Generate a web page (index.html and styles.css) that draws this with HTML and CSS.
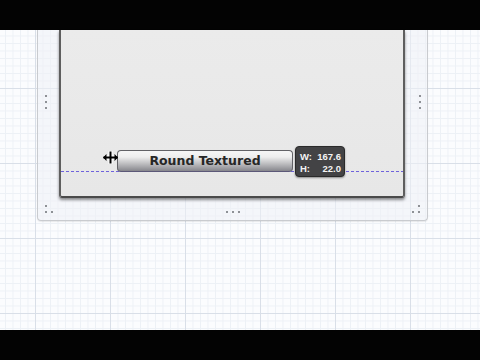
FILE: index.html
```html
<!DOCTYPE html>
<html>
<head>
<meta charset="utf-8">
<link rel="stylesheet" href="styles.css">
</head>
<body>
<div class="screen">
  <div class="bar"></div>
  <div class="canvas">
    <div class="panel">
      <span class="dots dots-left"><i></i><i></i><i></i></span>
      <span class="dots dots-right"><i></i><i></i><i></i></span>
      <span class="corner corner-bl"><i class="c1"></i><i class="c2"></i><i class="c3"></i></span>
      <span class="corner corner-br"><i class="c1"></i><i class="c2"></i><i class="c3"></i></span>
      <span class="dots-bottom"><i></i><i></i><i></i></span>
      <div class="window">
        <div class="guide"></div>
        <div class="row">
          <svg class="cursor" width="17" height="15" viewBox="0 0 17 15">
            <path d="M8.5 1 L8.5 14 M2 7.5 L15 7.5" stroke="#fff" stroke-width="4"/>
            <path d="M8.5 1.5 L8.5 13.5 M1.5 7.5 L15.5 7.5" stroke="#000" stroke-width="2"/>
            <path d="M1 7.5 L4.5 4 L4.5 11 Z M16 7.5 L12.5 4 L12.5 11 Z" fill="#000"/>
          </svg>
          <div class="button">Round Textured</div>
          <div class="tip">
            <div class="tip-line"><span>W:</span><span>167.6</span></div>
            <div class="tip-line"><span>H:</span><span>22.0</span></div>
          </div>
        </div>
      </div>
    </div>
  </div>
  <div class="bar"></div>
</div>
</body>
</html>
```
FILE: styles.css
```css
html, body {
  margin: 0;
  padding: 0;
  background: #000;
}
.screen {
  width: 480px;
  height: 360px;
  display: flex;
  flex-direction: column;
  overflow: hidden;
}
.bar {
  height: 30px;
  background: #030303;
}
.canvas {
  position: relative;
  height: 300px;
  background-color: #fbfcfe;
  background-image:
    linear-gradient(to right, #d9dfe8 1px, transparent 1px),
    linear-gradient(to bottom, #d9dfe8 1px, transparent 1px),
    linear-gradient(to right, #edf1f6 1px, transparent 1px),
    linear-gradient(to bottom, #edf1f6 1px, transparent 1px);
  background-size: 75px 75px, 75px 75px, 7.5px 7.5px, 7.5px 7.5px;
  background-position: 35px -17px, 35px -17px, 35px -17px, 35px -17px;
}
.panel {
  position: absolute;
  left: 37px;
  top: 0;
  width: 389px;
  height: 190px;
  border: 1px solid #c9cbcf;
  border-top: none;
  border-radius: 0 0 4px 4px;
  background: rgba(238, 241, 246, 0.55);
  box-shadow: 0 1px 1px rgba(0,0,0,0.08);
}
.dots {
  position: absolute;
  top: 65px;
  display: flex;
  flex-direction: column;
  gap: 4px;
}
.dots i, .dots-bottom i, .corner i {
  display: block;
  width: 2px;
  height: 2px;
  border-radius: 1px;
  background: #6d6f74;
}
.dots-left { left: 7px; }
.dots-right { right: 6px; }
.dots-bottom {
  position: absolute;
  left: 188px;
  bottom: 7px;
  display: flex;
  gap: 4px;
}
.corner {
  position: absolute;
  width: 8px;
  height: 8px;
}
.corner i { position: absolute; }
.corner-bl { left: 7px; bottom: 7px; }
.corner-bl .c1 { left: 0; top: 0; }
.corner-bl .c2 { left: 0; top: 6px; }
.corner-bl .c3 { left: 6px; top: 6px; }
.corner-br { right: 7px; bottom: 7px; }
.corner-br .c1 { right: 0; top: 0; }
.corner-br .c2 { right: 0; top: 6px; }
.corner-br .c3 { right: 6px; top: 6px; }
.window {
  position: absolute;
  left: 21px;
  top: 0;
  width: 346px;
  height: 168px;
  box-sizing: border-box;
  border: 2px solid #5e5e5e;
  border-top: none;
  border-bottom: 2px solid #4a4a4a;
  border-radius: 0 0 3px 3px;
  background: linear-gradient(to bottom, #ebebeb, #e7e7e7);
  box-shadow: 0 2px 3px rgba(0,0,0,0.45);
  padding-top: 120px;
}
.guide {
  position: absolute;
  left: 0;
  right: 0;
  top: 141px;
  height: 1px;
  background: repeating-linear-gradient(to right, #6e62dc 0 3px, transparent 3px 5px);
}
.row {
  position: relative;
  display: flex;
  align-items: flex-start;
  padding-left: 56px;
}
.cursor {
  position: absolute;
  left: 41px;
  top: 0px;
}
.button {
  width: 176px;
  height: 22px;
  box-sizing: border-box;
  border: 1px solid #626266;
  border-bottom-color: #5c5878;
  border-radius: 4px;
  background: linear-gradient(to bottom, #f6f6f6 0%, #eeeeee 30%, #b4b4b7 70%, #86868c 100%);
  font-family: "DejaVu Sans", sans-serif;
  font-weight: bold;
  font-size: 12.5px;
  color: #262626;
  display: flex;
  align-items: center;
  justify-content: center;
  padding-bottom: 1px;
}
.tip {
  position: absolute;
  z-index: 2;
  left: 234px;
  top: -4px;
  width: 50px;
  height: 31px;
  box-sizing: border-box;
  padding: 4px 3px 0 4px;
  background: #434345;
  border: 1px solid #2a2a2a;
  border-radius: 4px;
  box-shadow: 0 1px 2px rgba(0,0,0,0.4);
  font-family: "Liberation Sans", sans-serif;
  font-weight: bold;
  font-size: 9.5px;
  line-height: 12px;
  color: #f4f4f4;
}
.tip-line {
  display: flex;
  justify-content: space-between;
}
```
